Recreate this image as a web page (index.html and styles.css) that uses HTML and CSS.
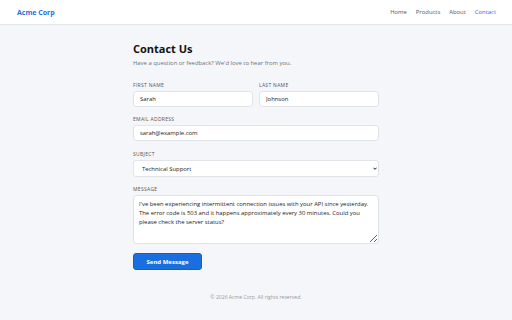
FILE: index.html
```html
<!DOCTYPE html>
<html lang="en">
<head>
    <meta charset="UTF-8">
    <meta name="viewport" content="width=device-width, initial-scale=1.0">
    <title>Contact Us - Acme Corp</title>
    <link rel="stylesheet" href="styles.css">
</head>
<body>
    <header class="site-header">
        <a class="logo" href="#">Acme Corp</a>
        <nav class="nav">
            <a href="#">Home</a>
            <a href="#">Products</a>
            <a href="#">About</a>
            <a href="#" class="active">Contact</a>
        </nav>
    </header>

    <main class="container">
        <h1>Contact Us</h1>
        <p class="intro">Have a question or feedback? We'd love to hear from you.</p>

        <form class="contact-form" onsubmit="return false">
            <div class="row">
                <div class="field">
                    <label for="first">First Name</label>
                    <input id="first" type="text" value="Sarah">
                </div>
                <div class="field">
                    <label for="last">Last Name</label>
                    <input id="last" type="text" value="Johnson">
                </div>
            </div>
            <div class="field field-email">
                <label for="email">Email Address</label>
                <input id="email" type="email" value="sarah@example.com">
            </div>
            <div class="field">
                <label for="subject">Subject</label>
                <div class="select-wrap">
                    <select id="subject">
                        <option>General Inquiry</option>
                        <option selected>Technical Support</option>
                        <option>Billing</option>
                    </select>
                    <svg class="chevron" viewBox="0 0 10 6" width="4" height="3"><path d="M1 1l4 4 4-4" fill="none" stroke="#111" stroke-width="2.4"/></svg>
                </div>
            </div>
            <div class="field">
                <label for="message">Message</label>
                <textarea id="message">I've been experiencing intermittent connection issues with your API since yesterday. The error code is 503 and it happens approximately every 30 minutes. Could you please check the server status?</textarea>
            </div>
            <button type="submit">Send Message</button>
        </form>
    </main>

    <footer class="site-footer">&copy; 2026 Acme Corp. All rights reserved.</footer>
</body>
</html>
```

FILE: styles.css
```css
* {
    box-sizing: border-box;
}
body {
    font-family: "Open Sans", "Liberation Sans", sans-serif;
    margin: 0;
    padding: 0;
    background: #f5f6fa;
    color: #1f2328;
}
.site-header {
    height: 25px;
    background: #fff;
    border-bottom: 1px solid #e3e5ea;
    display: flex;
    align-items: center;
    justify-content: space-between;
    padding: 0 16px 0 17px;
}
.logo {
    color: #1a6fe0;
    font-weight: 700;
    font-size: 7px;
    text-decoration: none;
}
.nav {
    display: flex;
    gap: 9px;
}
.nav a {
    color: #555;
    font-size: 5.9px;
    text-decoration: none;
}
.nav a.active {
    color: #1a6fe0;
}
.container {
    width: 246px;
    margin: 0 auto;
    padding-top: 16px;
}
h1 {
    font-size: 11px;
    line-height: 16px;
    font-weight: 700;
    margin: 0;
    color: #111;
}
.intro {
    font-size: 5.9px;
    line-height: 8px;
    color: #6b7280;
    margin: 2px 0 15px;
}
.row {
    display: grid;
    grid-template-columns: 1fr 1fr;
    gap: 6px;
}
.field {
    margin-bottom: 9px;
}
.field-email {
    margin-bottom: 10px;
}
.field label {
    display: block;
    font-size: 5px;
    line-height: 6px;
    text-transform: uppercase;
    letter-spacing: 0.3px;
    color: #555;
    margin-bottom: 3px;
}
.field input,
.field select,
.field textarea {
    display: block;
    width: 100%;
    height: 16px;
    font-family: inherit;
    font-size: 5.9px;
    color: #222;
    background: #fff;
    border: 1px solid #e1e4e8;
    border-radius: 3px;
    padding: 0 6px;
    margin: 0;
    outline: none;
}
.select-wrap {
    position: relative;
}
.field select {
    height: 17px;
    padding: 0 8px;
    appearance: none;
    -webkit-appearance: none;
}
.chevron {
    position: absolute;
    right: 2px;
    top: 7px;
}
.field textarea {
    height: 49px;
    padding: 4px 5px;
    line-height: 9px;
    resize: vertical;
}
button {
    display: block;
    margin-top: 1px;
    width: 69px;
    height: 17px;
    background: #1a6fe0;
    color: #fff;
    font-family: inherit;
    font-size: 6px;
    font-weight: 700;
    border: 1px solid #1560c8;
    border-radius: 3px;
    cursor: pointer;
}
.site-footer {
    text-align: center;
    font-size: 5.1px;
    line-height: 7px;
    color: #999;
    margin-top: 24px;
}
```
